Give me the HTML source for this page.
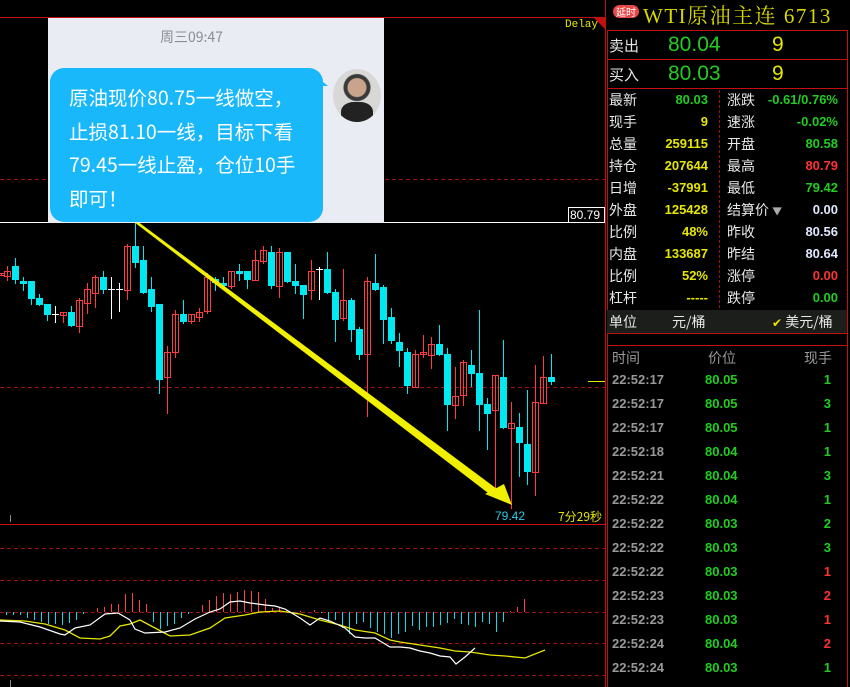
<!DOCTYPE html>
<html><head><meta charset="utf-8"><style>
*{margin:0;padding:0;box-sizing:border-box}
html,body{width:850px;height:687px;overflow:hidden}
body{background:#000;position:relative;font-family:"Liberation Sans","Noto Sans CJK SC",sans-serif}
.a{position:absolute;white-space:nowrap}
.cj{font-family:"Noto Sans CJK SC","WenQuanYi Zen Hei",sans-serif}
.w{color:#e8e8e8;font-size:15px}
.g{color:#22cc22}.y{color:#e6e600}.r{color:#ff3333}.b{color:#e0e8ff}
.num{font-weight:bold;font-size:13px;text-align:right}
</style></head><body>
<svg id="s" class="a" style="left:0;top:0" width="850" height="687"></svg>

<div class="a" style="left:48px;top:18px;width:336px;height:205px;background:#e9ecf3"></div>
<div class="a cj" style="left:160px;top:27px;font-size:14px;color:#8a8d96">周三09:47</div>
<div class="a" style="left:50px;top:68px;width:273px;height:154px;background:#18b8fb;border-radius:14px"></div>
<div class="a" style="left:318px;top:78px;width:0;height:0;border-left:10px solid #18b8fb;border-top:8px solid transparent"></div>
<div class="a cj" style="left:69px;top:80px;font-size:19.5px;line-height:33.5px;color:#fff">原油现价80.75一线做空，<br>止损81.10一线，目标下看<br>79.45一线止盈，仓位10手<br>即可！</div>
<div class="a" style="left:333px;top:69px;width:48px;height:53px;border-radius:50%;background:radial-gradient(circle at 50% 35%,#c9a48c 0 9px,#3a3a3a 10px 13px,#d8d8d6 14px);overflow:hidden"><div style="position:absolute;left:8px;top:33px;width:32px;height:24px;border-radius:40% 40% 0 0;background:#222"></div></div>

<div class="a" style="left:565px;top:19px;font-family:'Liberation Mono',monospace;font-size:11px;color:#e6e600">Delay</div>
<div class="a" style="left:568px;top:207px;width:37px;height:16px;border:1px solid #fff;color:#fff;font-size:12px;line-height:14px;padding-left:1px">80.79</div>
<div class="a" style="left:495px;top:509px;font-size:12px;color:#30c8e8">79.42</div>
<div class="a cj" style="left:558px;top:508px;font-size:12px;color:#e6e600">7分29秒</div>

<div class="a cj" style="left:613px;top:5px;width:26px;height:13px;background:#e84848;border-radius:7px;color:#fff;font-size:10px;line-height:13px;text-align:center">延时</div>
<div class="a" style="left:643px;top:4px;font-family:'Liberation Serif','Noto Serif CJK SC',serif;font-size:21px;letter-spacing:1.5px;color:#d8d800;line-height:24px">WTI原油主连 6713</div>
<div class="a cj w" style="left:609px;top:35px">卖出</div>
<div class="a g" style="left:668px;top:33px;font-size:21px">80.04</div>
<div class="a y" style="left:772px;top:33px;font-size:21px">9</div>
<div class="a cj w" style="left:609px;top:64px">买入</div>
<div class="a g" style="left:668px;top:62px;font-size:21px">80.03</div>
<div class="a y" style="left:772px;top:62px;font-size:21px">9</div>
<div id="grid"></div>
<div class="a" style="left:607px;top:310px;width:240px;height:23px;background:#1c1e1c"></div>
<div class="a cj w" style="left:609px;top:312px;font-size:14px">单位</div>
<div class="a cj w" style="left:672px;top:312px;font-size:14px">元/桶</div>
<div class="a cj w" style="left:772px;top:312px;font-size:14px"><span class="y" style="font-size:12px">✔</span> 美元/桶</div>
<div class="a cj" style="left:612px;top:348px;font-size:14px;color:#999">时间</div>
<div class="a cj" style="left:708px;top:348px;font-size:14px;color:#999">价位</div>
<div class="a cj" style="left:804px;top:348px;font-size:14px;color:#999">现手</div>
<div id="ts"></div>

<script>
var S='';
function L(x1,y1,x2,y2,c,w,d){S+='<line x1="'+x1+'" y1="'+y1+'" x2="'+x2+'" y2="'+y2+'" stroke="'+c+'" stroke-width="'+(w||1)+'"'+(d?' stroke-dasharray="'+d+'"':'')+' shape-rendering="crispEdges"/>';}
function R(x,y,w,h,f,s){S+='<rect x="'+x+'" y="'+y+'" width="'+w+'" height="'+h+'" fill="'+f+'"'+(s?' stroke="'+s+'"':'')+' shape-rendering="crispEdges"/>';}
L(0,17.5,605,17.5,'#c01010');
S+='<polygon points="594,18 605,18 605,29" fill="#c01010"/>';
L(605.5,0,605.5,687,'#c01010');
L(0,179.5,605,179.5,'#a01010',1,'4 3');
L(0,222.5,605,222.5,'#fff');
L(0,387.5,605,387.5,'#a01010',1,'4 3');
L(0,524.5,605,524.5,'#d01010');
L(10.5,515,10.5,522,'#888');
L(10.5,680,10.5,687,'#888');
L(588,381.5,605,381.5,'#e6e600');
[548,580,612,643,675].forEach(function(y){L(0,y+.5,605,y+.5,'#a01010',1,'4 3');});
var C=[[1,273,275,273,275,'r'],[7,271,276,266,280,'r'],[15,266,280,258,283,'c'],[23,281,284,277,290,'c'],[31,281,299,281,304,'c'],[39,298,305,294,305,'c'],[47,304,315,304,320,'c'],[55,314,314,306,322,'w'],[63,312,315,312,322,'r'],[71,312,326,306,326,'c'],[79,300,326,298,332,'r'],[87,289,303,283,313,'r'],[95,277,293,275,307,'r'],[103,277,290,271,293,'c'],[111,289,289,277,318,'w'],[119,289,289,283,311,'w'],[127,246,290,244,299,'r'],[135,246,263,223,267,'c'],[143,260,293,246,293,'c'],[151,289,307,277,311,'c'],[159,304,380,304,393,'c'],[167,352,377,346,413,'r'],[175,314,352,310,357,'r'],[183,314,322,300,323,'c'],[191,314,321,314,323,'r'],[199,312,317,308,321,'r'],[207,277,311,273,313,'r'],[215,279,283,277,290,'c'],[223,283,286,277,286,'c'],[231,271,286,271,288,'r'],[239,271,274,264,280,'c'],[247,271,280,271,288,'c'],[255,260,280,250,280,'r'],[263,250,261,246,263,'r'],[271,252,286,246,288,'c'],[279,252,286,248,297,'r'],[287,252,282,252,282,'c'],[295,281,286,264,293,'c'],[303,285,295,285,318,'c'],[311,271,290,260,299,'r'],[319,269,269,267,299,'w'],[327,269,293,252,293,'c'],[335,292,320,289,341,'c'],[343,300,318,269,320,'r'],[351,300,330,298,341,'c'],[359,329,355,327,359,'c'],[367,281,354,277,416,'r'],[375,283,290,254,290,'c'],[383,287,320,285,343,'c'],[391,317,341,308,343,'c'],[399,342,351,333,366,'c'],[407,352,386,348,393,'c'],[415,354,387,350,387,'r'],[423,352,354,335,357,'r'],[431,344,355,337,368,'r'],[439,344,355,325,355,'c'],[447,354,405,348,430,'c'],[455,396,405,367,418,'r'],[463,362,395,360,405,'r'],[471,365,374,350,386,'c'],[479,373,405,310,430,'c'],[487,404,414,398,449,'c'],[495,375,410,375,491,'r'],[503,377,428,340,428,'c'],[511,423,428,402,508,'r'],[519,427,443,413,476,'c'],[527,444,472,390,484,'c'],[535,402,472,365,495,'r'],[543,377,403,356,403,'r'],[551,377,382,354,384,'c']];
C.forEach(function(k){var x=k[0],c=k[5]=='r'?'#ff3c3c':k[5]=='c'?'#00e8f0':'#fff';
 L(x+.5,k[3],x+.5,k[4]+1,c);
 if(k[5]=='w'){L(x-3,k[1]+.5,x+4,k[1]+.5,c);}
 else if(k[5]=='r'){R(x-2.5,k[1]+.5,6,Math.max(k[2]-k[1],1),'none',c);}
 else R(x-3,k[1],7,Math.max(k[2]-k[1],2),c);});
S+='<polygon points="134,222 137,221 497,489 492,496" fill="#f0f000"/>';
S+='<polygon points="485,494 504,484 512,505" fill="#f0f000"/>';
var mb=[-3,-3,-3,-6,-8,-10,-12,-12,-13,-11,-8,-2,0,4,5,8,8,18,19,12,8,-10,-17,-14,-12,-6,-2,0,7,12,16,19,18,20,22,21,20,13,4,4,2,-2,1,0,2,-1,-10,-8,-16,-22,-12,-10,-16,-20,-22,-26,-22,-20,-14,-18,-15,-15,-13,-11,-7,-12,-13,-15,-10,-12,-20,-10,1,5,13];
mb.forEach(function(v,i){var x=6+i*7;if(v>0)L(x+.5,612-v,x+.5,612,'#ff4040');else if(v<0)L(x+.5,612,x+.5,612-v,'#00e0e8');});
S+='<polyline points="0,620 25,621 45,624 65,630 80,638 100,639 110,636 120,626 130,624 140,620 155,628 170,636 190,635 210,628 225,618 245,615 260,612 280,611 300,614 320,620 340,625 355,630 375,633 390,640 400,642 420,645 440,648 455,651 470,652 490,655 505,656 525,658 545,650" fill="none" stroke="#e6e600" stroke-width="1.3"/>';
S+='<polyline points="0,621 20,622 40,627 60,634 65,635 75,628 90,625 105,614 118,613 130,620 135,629 145,633 165,632 180,628 195,619 210,612 220,609 230,602 240,601 250,603 265,605 275,606 285,609 300,618 310,625 320,618 330,621 345,628 355,637 365,638 375,638 390,647 400,647 410,648 420,651 430,653 440,656 450,657 456,664 465,657 475,648" fill="none" stroke="#fff" stroke-width="1.2"/>';
L(607.5,30,607.5,687,'#c01010');L(847.5,30,847.5,687,'#c01010');
[30,59,88,310,333,345].forEach(function(y){L(607,y+.5,848,y+.5,'#c01010');});
L(719.5,90,719.5,308,'#a01010',1,'3 2');
document.getElementById('s').innerHTML=S;
var G=[['最新','80.03','g','涨跌','-0.61/0.76%','g'],['现手','9','y','速涨','-0.02%','g'],['总量','259115','y','开盘','80.58','g'],['持仓','207644','y','最高','80.79','r'],['日增','-37991','y','最低','79.42','g'],['外盘','125428','y','结算价','0.00','b'],['比例','48%','y','昨收','80.56','b'],['内盘','133687','y','昨结','80.64','b'],['比例','52%','y','涨停','0.00','r'],['杠杆','-----','y','跌停','0.00','g']];
var h='';G.forEach(function(r,i){var t=90+i*22;
h+='<div class="a cj w" style="left:609px;top:'+t+'px;font-size:14px">'+r[0]+'</div>';
h+='<div class="a num '+r[2]+'" style="right:142px;top:'+(t+2)+'px">'+r[1]+'</div>';
h+='<div class="a cj w" style="left:727px;top:'+t+'px;font-size:14px">'+r[3]+(i==5?' <span style="color:#aaa;font-size:10px">▼</span>':'')+'</div>';
h+='<div class="a num '+r[5]+'" style="right:12px;top:'+(t+2)+'px">'+r[4]+'</div>';});
document.getElementById('grid').innerHTML=h;
var T=[['17','80.05','1','g'],['17','80.05','3','g'],['17','80.05','1','g'],['18','80.04','1','g'],['21','80.04','3','g'],['22','80.04','1','g'],['22','80.03','2','g'],['22','80.03','3','g'],['22','80.03','1','r'],['23','80.03','2','r'],['23','80.03','1','r'],['24','80.04','2','r'],['24','80.03','1','g'],['25','80.03','1','g']];
h='';T.forEach(function(r,i){var t=372+i*24;
h+='<div class="a num" style="left:612px;top:'+t+'px;color:#999;text-align:left">22:52:'+r[0]+'</div>';
h+='<div class="a num g" style="left:705px;top:'+t+'px;text-align:left">'+r[1]+'</div>';
h+='<div class="a num '+r[3]+'" style="right:19px;top:'+t+'px">'+r[2]+'</div>';});
document.getElementById('ts').innerHTML=h;
</script>
</body></html>
